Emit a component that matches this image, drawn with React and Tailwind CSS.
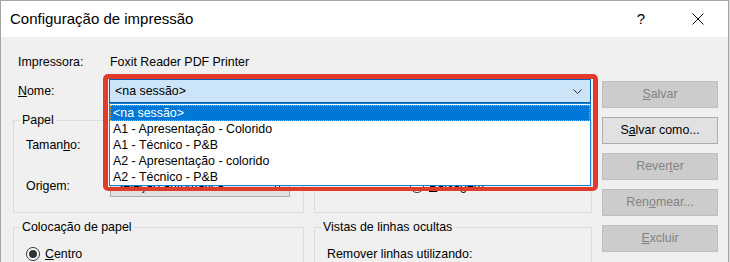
import { useState } from "react";

const items = [
  "<na sessão>",
  "A1 - Apresentação - Colorido",
  "A1 - Técnico - P&B",
  "A2 - Apresentação - colorido",
  "A2 - Técnico - P&B",
];

function Chevron() {
  return (
    <svg width="9" height="5" viewBox="0 0 9 5" className="shrink-0">
      <path d="M0.5 0.5 L4.5 4.5 L8.5 0.5" fill="none" stroke="#333" strokeWidth="1" />
    </svg>
  );
}

function Radio({ checked }) {
  return (
    <span className="w-[14px] h-[14px] rounded-full border border-[#333] bg-white flex items-center justify-center shrink-0">
      {checked && <span className="w-[8px] h-[8px] rounded-full bg-[#333]" />}
    </span>
  );
}

function Btn({ children, disabled }) {
  return (
    <button
      className={
        disabled
          ? "w-[116px] h-[27px] border border-[#bfbfbf] bg-[#cccccc] text-[#838383] text-[12.4px]"
          : "w-[116px] h-[27px] border border-[#adadad] bg-[#e1e1e1] text-black text-[12.4px]"
      }
    >
      {children}
    </button>
  );
}

function Group({ title, className, children }) {
  return (
    <fieldset className={"border border-[#dcdcdc] " + className}>
      <legend className="ml-[6px] px-[2px] h-[16px] leading-[16px]">{title}</legend>
      {children}
    </fieldset>
  );
}

export default function App() {
  const [selected] = useState(0);

  return (
    <div className="w-[730px] h-[262px] overflow-hidden bg-[#d8d8d8] text-[12.4px] text-black font-['Liberation_Sans',Arial,sans-serif]">
      <div className="w-[729px] h-[263px] border-l border-r border-t border-[#a5a5a5] bg-[#f0f0f0]">
        {/* title bar */}
        <div className="h-[36px] bg-white flex items-center">
          <span className="pl-[9px] text-[15px] text-[#000]">Configuração de impressão</span>
          <span className="ml-auto text-[15px] mr-[47px]">?</span>
          <svg width="12" height="12" viewBox="0 0 12 12" className="mr-[24px]">
            <path d="M0.5 0.5 L11.5 11.5 M11.5 0.5 L0.5 11.5" stroke="#111" strokeWidth="1" />
          </svg>
        </div>

        <div className="relative flex">
          {/* left side */}
          <div className="w-[591px] pl-[12px]">
            <div className="flex pt-[17px] pl-[5px] leading-[16px]">
              <span className="w-[92px]">Impressora:</span>
              <span>Foxit Reader PDF Printer</span>
            </div>
            <div className="flex items-center mt-[9px] pl-[5px]">
              <span className="w-[91px]">
                <u>N</u>ome:
              </span>
              <div className="w-[482px] h-[24px] border border-[#0a5fae] bg-[#cce4f7] flex items-center pl-[5px] pr-[8px]">
                <span className="flex-1">&lt;na sessão&gt;</span>
                <Chevron />
              </div>
            </div>

            <div className="flex gap-[10px] mt-[9px]">
              <Group title="Papel" className="w-[291px] h-[101px]">
                <div className="pt-[6px] pl-[12px]">
                  <div className="flex items-center h-[22px]">
                    <span className="w-[84px]">
                      Taman<u>h</u>o:
                    </span>
                    <div className="w-[180px] h-[22px] border border-[#adadad] bg-[#e1e1e1] flex items-center justify-end pr-[7px]">
                      <Chevron />
                    </div>
                  </div>
                  <div className="flex items-center h-[22px] mt-[19px]">
                    <span className="w-[84px]">Origem:</span>
                    <div className="w-[180px] h-[22px] border border-[#adadad] bg-[#e1e1e1] flex items-center pl-[4px] pr-[7px]">
                      <span className="flex-1">Seleção automática</span>
                      <Chevron />
                    </div>
                  </div>
                </div>
              </Group>
              <Group title="" className="w-[278px] h-[101px]">
                <div className="pt-[6px] pl-[95px]">
                  <div className="flex items-center h-[22px]">
                    <Radio checked />
                  </div>
                  <div className="flex items-center gap-[5px] h-[22px] mt-[19px]">
                    <Radio />
                    <span>
                      <u>P</u>aisagem
                    </span>
                  </div>
                </div>
              </Group>
            </div>

            <div className="flex gap-[10px] mt-[6px]">
              <Group title="Colocação de papel" className="w-[291px] h-[60px]">
                <div className="pt-[11px] pl-[12px] flex items-center gap-[5px] leading-[16px]">
                  <Radio checked />
                  <span>
                    <u>C</u>entro
                  </span>
                </div>
              </Group>
              <Group title="Vistas de linhas ocultas" className="w-[278px] h-[60px]">
                <div className="pt-[11px] pl-[12px] leading-[16px]">Remover linhas utilizando:</div>
              </Group>
            </div>
          </div>

          {/* right buttons */}
          <div className="flex flex-col gap-[9px] pt-[44px] pl-[10px]">
            <Btn disabled>
              <u>S</u>alvar
            </Btn>
            <Btn>
              S<u>a</u>lvar como...
            </Btn>
            <Btn disabled>
              Rever<u>t</u>er
            </Btn>
            <Btn disabled>
              Ren<u>o</u>mear...
            </Btn>
            <Btn disabled>
              <u>E</u>xcluir
            </Btn>
          </div>

          {/* open dropdown list */}
          <div className="absolute left-[108px] top-[66px] w-[482px] h-[83px] border border-[#1a7fd4] bg-white pt-[1px]">
            {items.map((it, i) => (
              <div
                key={it}
                className={
                  i === selected
                    ? "h-[16px] leading-[14px] pl-[2px] bg-[#0078d7] text-white border border-dotted border-[#f0a23a]"
                    : "h-[16px] leading-[16px] pl-[3px]"
                }
              >
                {it}
              </div>
            ))}
          </div>

          {/* red highlight frame */}
          <div className="absolute left-[102px] top-[37px] w-[495px] h-[117px] border-[5px] border-b-[4px] border-[#e03c2b] rounded-[5px]" />
        </div>
      </div>
    </div>
  );
}
